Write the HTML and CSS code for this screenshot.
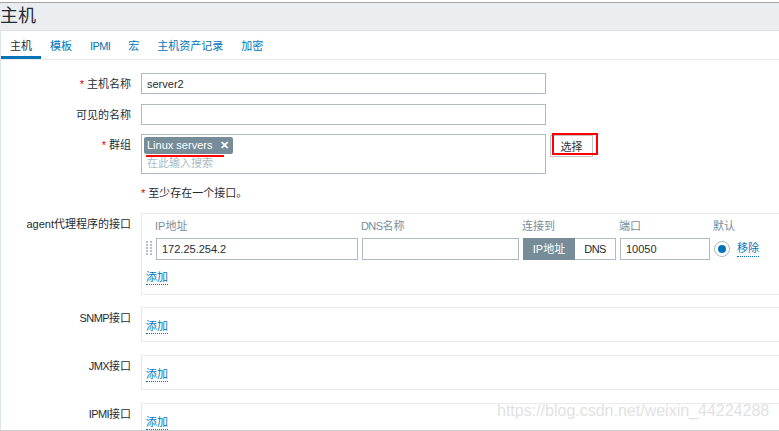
FILE: index.html
```html
<!DOCTYPE html>
<html lang="zh-CN">
<head>
  <meta charset="UTF-8">
  <meta name="viewport" content="width=device-width, initial-scale=1.0">
  <title>主机</title>
  <link rel="stylesheet" href="styles.css">
</head>
<body>
<div class="page">

  <!-- Title -->
  <div class="header">
    <h1>主机</h1>
  </div>

  <div class="content">
    <!-- Tabs -->
    <ul class="tabs">
      <li class="active">主机</li>
      <li><a>模板</a></li>
      <li><a class="caps">IPMI</a></li>
      <li><a>宏</a></li>
      <li><a>主机资产记录</a></li>
      <li><a>加密</a></li>
    </ul>

    <!-- Form -->
    <div class="form">
      <div class="row row-first">
        <label class="lbl"><span class="req">*</span> 主机名称</label>
        <div class="field"><input class="text-input" type="text" value="server2"></div>
      </div>

      <div class="row">
        <label class="lbl">可见的名称</label>
        <div class="field"><input class="text-input" type="text" value=""></div>
      </div>

      <div class="row">
        <label class="lbl"><span class="req">*</span> 群组</label>
        <div class="field group-field">
          <div class="multiselect">
            <span class="tag">Linux servers <b class="tag-x">✕</b></span>
            <span class="mark-line"></span>
            <div class="placeholder">在此输入搜索</div>
          </div>
          <div class="select-wrap">
            <button class="btn-select">选择</button>
            <span class="mark-box"></span>
          </div>
        </div>
      </div>

      <div class="row note-row">
        <span class="lbl"></span>
        <div class="field note"><span class="req">*</span> 至少存在一个接口。</div>
      </div>

      <div class="row iface-row">
        <label class="lbl">agent代理程序的接口</label>
        <div class="field">
          <div class="iface-box agent-box">
            <div class="iface-grid">
              <span></span>
              <span class="col-head">IP地址</span>
              <span class="col-head"><span class="caps">DNS</span>名称</span>
              <span class="col-head">连接到</span>
              <span class="col-head">端口</span>
              <span class="col-head">默认</span>

              <span class="drag">
                <svg width="6" height="16" viewBox="0 0 6 16">
                  <g fill="#b8c4ca">
                    <rect x="0" y="0" width="2" height="2"/><rect x="4" y="0" width="2" height="2"/>
                    <rect x="0" y="3" width="2" height="2"/><rect x="4" y="3" width="2" height="2"/>
                    <rect x="0" y="6" width="2" height="2"/><rect x="4" y="6" width="2" height="2"/>
                    <rect x="0" y="9" width="2" height="2"/><rect x="4" y="9" width="2" height="2"/>
                    <rect x="0" y="12" width="2" height="2"/><rect x="4" y="12" width="2" height="2"/>
                  </g>
                </svg>
              </span>
              <input class="text-input" type="text" value="172.25.254.2">
              <input class="text-input" type="text" value="">
              <div class="seg">
                <span class="seg-on">IP地址</span>
                <span class="seg-off caps">DNS</span>
              </div>
              <input class="text-input" type="text" value="10050">
              <div class="default-cell">
                <span class="radio"><span class="radio-dot"></span></span>
                <a class="link">移除</a>
              </div>
            </div>
            <a class="link">添加</a>
          </div>
        </div>
      </div>

      <div class="row iface-row">
        <label class="lbl"><span class="caps">SNMP</span>接口</label>
        <div class="field"><div class="iface-box"><a class="link">添加</a></div></div>
      </div>

      <div class="row iface-row">
        <label class="lbl"><span class="caps">JMX</span>接口</label>
        <div class="field"><div class="iface-box"><a class="link">添加</a></div></div>
      </div>

      <div class="row iface-row">
        <label class="lbl"><span class="caps">IPMI</span>接口</label>
        <div class="field"><div class="iface-box"><a class="link">添加</a></div></div>
      </div>
    </div>
  </div>

  <div class="watermark">https://blog.csdn.net/weixin_44224288</div>
</div>
</body>
</html>
```

FILE: styles.css
```css
body {
  margin: 0;
  background: #fff;
  font-family: "Liberation Sans", Arial, "Noto Sans CJK SC", sans-serif;
  font-size: 11px;
  color: #1f2c33;
}
.page {
  position: relative;
  width: 779px;
  height: 431px;
  box-sizing: border-box;
  overflow: hidden;
  padding-top: 2px;
  border-bottom: 1px solid #cbcbcb;
}
.header {
  background: #ebeef0;
  border-top: 1px solid #a5a5a5;
  border-bottom: 1px solid #dde2e5;
  height: 27px;
}
.header h1 {
  margin: 0;
  font-size: 18px;
  font-weight: normal;
  line-height: 27px;
  color: #1f2c33;
}
.content {
  border-left: 1px solid #dfe4e7;
}
.caps {
  letter-spacing: -0.6px;
}
.tabs {
  list-style: none;
  margin: 0;
  padding: 0;
  display: flex;
  border-bottom: 1px solid #ebebeb;
}
.tabs li {
  padding: 8px 9px 3px;
  line-height: 14px;
  border-bottom: 3px solid transparent;
}
.tabs li.active {
  border-bottom-color: #0275b8;
  color: #1f2c33;
}
.tabs a {
  color: #0275b8;
}
.form {
  padding-top: 13px;
}
.row {
  display: grid;
  grid-template-columns: 130px 660px;
  column-gap: 10px;
  margin-bottom: 9px;
}
.row-first {
  margin-bottom: 10px;
}
.lbl {
  text-align: right;
  padding-top: 4px;
  line-height: 14px;
  white-space: nowrap;
}
.req {
  color: #d40000;
}
.text-input {
  box-sizing: border-box;
  height: 21px;
  width: 405px;
  border: 1px solid #acbbc2;
  padding: 0 5px;
  font: inherit;
  color: #1f2c33;
  background: #fff;
  margin: 0;
  outline: none;
}
.group-field {
  display: flex;
  align-items: flex-start;
  gap: 4px;
}
.multiselect {
  position: relative;
  box-sizing: border-box;
  width: 405px;
  height: 40px;
  border: 1px solid #acbbc2;
  padding: 2px;
}
.tag {
  display: inline-block;
  height: 17px;
  line-height: 17px;
  padding: 0 4px 0 3px;
  background: #768d99;
  color: #fff;
  border-radius: 2px;
}
.tag-x {
  margin-left: 5px;
  font-size: 11px;
}
.mark-line {
  position: absolute;
  left: 4px;
  top: 20px;
  width: 78px;
  height: 2px;
  background: #f00;
}
.placeholder {
  margin-top: 2px;
  padding-left: 3px;
  line-height: 14px;
  color: #acbbc2;
}
.select-wrap {
  position: relative;
  margin-top: 1px;
}
.btn-select {
  box-sizing: border-box;
  width: 43px;
  height: 22px;
  border: 1px solid #c3c3c3;
  background: #fff;
  color: #333;
  font: inherit;
  padding: 0;
}
.mark-box {
  position: absolute;
  left: 2px;
  top: -2px;
  width: 46px;
  height: 22px;
  box-sizing: border-box;
  border: 2px solid #f00;
}
.note-row {
  margin-bottom: 13px;
}
.note-row .lbl {
  padding-top: 0;
}
.note {
  line-height: 14px;
  padding-top: 3px;
  height: 17px;
  box-sizing: border-box;
}
.iface-row {
  margin-bottom: 13px;
}
.iface-box {
  box-sizing: border-box;
  width: 660px;
  border: 1px solid #ebebeb;
  padding: 11px 4px 8px;
  line-height: 14px;
}
.agent-box {
  padding: 5px 4px 10px;
}
.iface-row:has(.agent-box) {
  margin-bottom: 12px;
}
.iface-grid {
  display: grid;
  grid-template-columns: 6px 202px 157px 93px 90px auto;
  column-gap: 4px;
  row-gap: 5px;
  align-items: center;
  margin-bottom: 10px;
}
.iface-grid .text-input {
  width: 100%;
  height: 22px;
}
.col-head {
  color: #768d99;
  line-height: 14px;
  margin-left: -1px;
}
.drag svg {
  display: block;
}
.seg {
  display: flex;
  height: 22px;
  box-sizing: border-box;
}
.seg span {
  box-sizing: border-box;
  height: 22px;
  line-height: 20px;
  text-align: center;
}
.seg-on {
  width: 52px;
  background: #768d99;
  border: 1px solid #768d99;
  color: #fff;
}
.seg-off {
  width: 41px;
  border: 1px solid #acbbc2;
  border-left: none;
  color: #1f2c33;
}
.default-cell {
  display: flex;
  align-items: center;
}
.radio {
  box-sizing: border-box;
  width: 16px;
  height: 16px;
  border: 1px solid #acbbc2;
  border-radius: 50%;
  display: flex;
  align-items: center;
  justify-content: center;
}
.radio-dot {
  width: 8px;
  height: 8px;
  border-radius: 50%;
  background: #0275b8;
}
.default-cell .link {
  margin-left: 7px;
}
.link {
  color: #0275b8;
  border-bottom: 1px dotted #0275b8;
  padding-bottom: 1px;
}
.watermark {
  position: absolute;
  left: 497px;
  top: 402px;
  font-family: "Liberation Sans", Arial, sans-serif;
  font-size: 16px;
  color: #e2e2e2;
}
```
